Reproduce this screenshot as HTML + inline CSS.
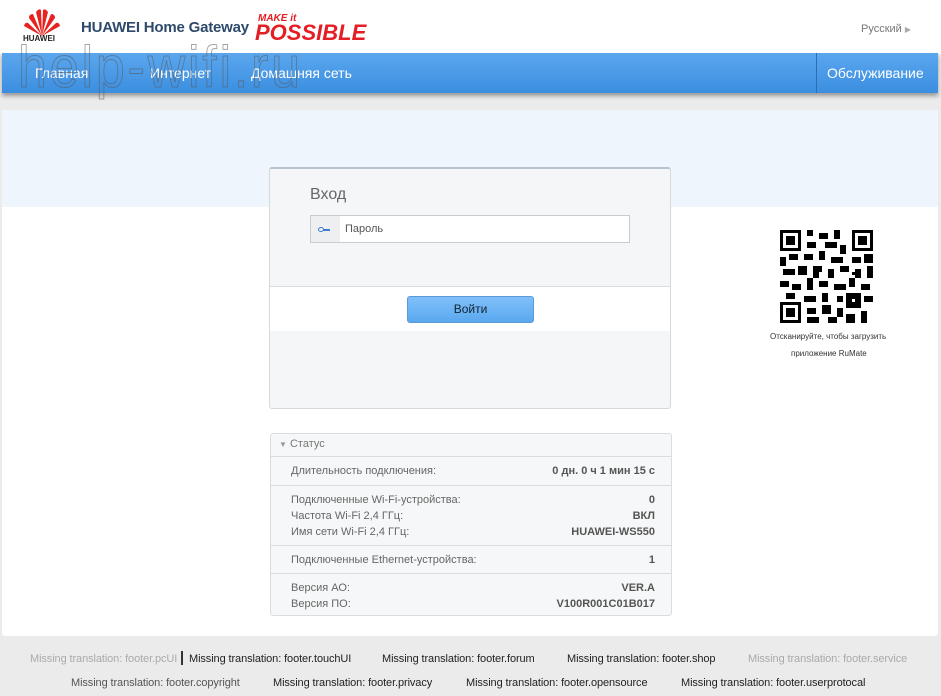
<!DOCTYPE html>
<html><head><meta charset="utf-8"><style>
*{margin:0;padding:0;box-sizing:border-box}
body{width:941px;height:696px;background:#ebebeb;font-family:"Liberation Sans",sans-serif;position:relative;overflow:hidden}
.a{position:absolute}
.hdr{left:0;top:0;width:941px;height:54px;background:#fff}
.nav{left:2px;top:53px;width:936px;height:40px;background:linear-gradient(#5ba7ee,#3b8ee0);box-shadow:0 3px 4px rgba(0,0,0,.35);color:#fff;font-size:14px}
.nav span{position:absolute;top:12px}
.main{left:2px;top:110px;width:936px;height:526px;background:#fff;border-radius:3px}
.band{left:2px;top:110px;width:936px;height:97px;background:#eef5fc}
.box{left:269px;top:167px;width:402px;height:242px;background:#f5f6f8;border:1px solid #d5d8dc;border-top:2px solid #b8c2cc;border-radius:3px}
.st{left:270px;top:433px;width:402px;height:183px;background:#f6f7f8;border:1px solid #dcdcdc;border-radius:3px;font-size:11px;color:#666}
.row{position:absolute;left:20px;right:16px}
.row b{position:absolute;right:0;color:#555}
.sep{position:absolute;left:0;right:0;height:1px;background:#dcdcdc}
.ft{font-size:11px;letter-spacing:-0.1px;color:#222;top:653px}
.g{color:#aaa}
</style></head><body>
<div class="a hdr"></div>
<svg class="a" style="left:22px;top:6px" width="40" height="32" viewBox="0 0 40 32">
<g fill="#e8231f"><path d="M20 30 L14 6 Q17 2 19 4Z"/><path d="M20 30 L26 6 Q23 2 21 4Z"/><path d="M20 30 L7 12 Q7 8 11 8Z"/><path d="M20 30 L33 12 Q33 8 29 8Z"/><path d="M20 30 L2 20 Q3 16 6 17Z"/><path d="M20 30 L38 20 Q37 16 34 17Z"/></g></svg>
<div class="a" style="left:23px;top:34px;font-size:8px;font-weight:bold;color:#222">HUAWEI</div>
<div class="a" style="left:81px;top:19px;font-size:15px;font-weight:bold;color:#2e4a6b;letter-spacing:-0.2px">HUAWEI Home Gateway</div>
<div class="a" style="left:258px;top:13px;font-size:10px;font-weight:bold;color:#e31e24;font-style:italic">MAKE it</div>
<div class="a" style="left:255px;top:20px;font-size:22px;font-weight:900;color:#e31e24;font-style:italic;letter-spacing:0px">POSSIBLE</div>
<div class="a" style="left:861px;top:23px;font-size:11px;color:#777">Русский <span style="font-size:8px;color:#aaa">▶</span></div>
<div class="a nav"><span style="left:33px">Главная</span><span style="left:148px">Интернет</span><span style="left:249px">Домашняя сеть</span>
<div style="position:absolute;left:814px;top:0;width:1px;height:40px;background:#2a6fb5"></div><span style="left:825px">Обслуживание</span></div>
<div class="a" style="left:18px;top:38px;font-size:58px;line-height:60px;color:transparent;-webkit-text-stroke:1px rgba(90,90,90,.55);letter-spacing:3px;transform:scaleX(0.9);transform-origin:left">help-wifi.ru</div>
<div class="a main"></div>
<div class="a band"></div>
<div class="a box">
<div class="a" style="left:40px;top:17px;font-size:16px;color:#666">Вход</div>
<div class="a" style="left:40px;top:46px;width:320px;height:28px;background:#fff;border:1px solid #ccc">
<div style="position:absolute;left:0;top:0;width:29px;height:26px;background:#eeeff1"></div>
<div style="position:absolute;left:7px;top:11px;width:6px;height:5px;border:1.5px solid #3b7bd0;border-radius:50%"></div>
<div style="position:absolute;left:12px;top:13px;width:7px;height:2px;background:#3b7bd0"></div>
<div style="position:absolute;left:34px;top:7px;font-size:11px;color:#555">Пароль</div></div>
<div class="a" style="left:0;top:117px;width:400px;height:45px;background:#fff;border-top:1px solid #ddd"></div>
<div class="a" style="left:137px;top:127px;width:127px;height:27px;background:linear-gradient(#80c0f8,#5aa8f0);border:1px solid #5a9ad8;border-radius:3px;text-align:center;font-size:12px;line-height:25px;color:#123">Войти</div>
</div>
<div class="a st">
<div class="a" style="left:8px;top:4px;font-size:11px;color:#777"><span style="font-size:8px;color:#999">▼</span> Статус</div>
<div class="sep" style="top:22px"></div>
<div class="row" style="top:31px">Длительность подключения:<b>0 дн. 0 ч 1 мин 15 с</b></div>
<div class="sep" style="top:51px"></div>
<div class="row" style="top:60px">Подключенные Wi-Fi-устройства:<b>0</b></div>
<div class="row" style="top:76px">Частота Wi-Fi 2,4 ГГц:<b>ВКЛ</b></div>
<div class="row" style="top:92px">Имя сети Wi-Fi 2,4 ГГц:<b>HUAWEI-WS550</b></div>
<div class="sep" style="top:111px"></div>
<div class="row" style="top:120px">Подключенные Ethernet-устройства:<b>1</b></div>
<div class="sep" style="top:139px"></div>
<div class="row" style="top:148px">Версия АО:<b>VER.A</b></div>
<div class="row" style="top:164px">Версия ПО:<b>V100R001C01B017</b></div>
</div>
<svg class="a" style="left:780px;top:230px" width="93" height="93" viewBox="0 0 31 31" shape-rendering="crispEdges">
<g fill="#000">
<path d="M0 0h7v7h-7zM1 1v5h5v-5zM2 2h3v3h-3z" fill-rule="evenodd"/>
<path d="M24 0h7v7h-7zM25 1v5h5v-5zM26 2h3v3h-3z" fill-rule="evenodd"/>
<path d="M0 24h7v7h-7zM1 25v5h5v-5zM2 26h3v3h-3z" fill-rule="evenodd"/>
<path d="M9 0h2v2h-2zM13 1h3v2h-3zM18 0h2v3h-2zM9 4h3v2h-3zM15 4h4v2h-4zM20 5h2v3h-2zM8 8h3v2h-3zM13 7h2v3h-2zM17 9h4v2h-4zM0 9h2v3h-2zM3 8h3v2h-3zM24 9h3v2h-3zM28 8h3v3h-3zM1 13h4v2h-4zM6 12h3v3h-3zM11 12h3v2h-3zM16 13h2v3h-2zM20 12h3v2h-3zM25 13h2v3h-2zM29 12h2v4h-2zM0 17h3v2h-3zM4 18h3v2h-3zM9 16h2v4h-2zM13 17h3v2h-3zM18 18h4v2h-4zM23 16h2v3h-2zM27 18h3v2h-3zM2 21h3v2h-3zM8 22h4v2h-4zM14 21h2v3h-2zM19 22h2v2h-2zM22 21h5v5h-5zM28 22h3v2h-3zM9 26h3v2h-3zM14 25h3v3h-3zM19 26h2v3h-2zM9 29h4v2h-4zM16 29h3v2h-3zM22 28h3v3h-3zM27 27h2v4h-2zM11 14h2v2h-2zM24 14h1v1h-1z"/>
</g><rect x="24" y="23" width="1" height="1" fill="#fff"/></svg>
<div class="a" style="left:770px;top:332px;font-size:8px;color:#333">Отсканируйте, чтобы загрузить</div>
<div class="a" style="left:791px;top:349px;font-size:8px;color:#333">приложение RuMate</div>
<div class="a ft g" style="left:30px">Missing translation: footer.pcUI</div>
<div class="a" style="left:181px;top:651px;width:2px;height:14px;background:#333"></div>
<div class="a ft" style="left:189px">Missing translation: footer.touchUI</div>
<div class="a ft" style="left:382px">Missing translation: footer.forum</div>
<div class="a ft" style="left:567px">Missing translation: footer.shop</div>
<div class="a ft g" style="left:748px">Missing translation: footer.service</div>
<div class="a ft" style="left:71px;top:677px;color:#555">Missing translation: footer.copyright</div>
<div class="a ft" style="left:273px;top:677px">Missing translation: footer.privacy</div>
<div class="a ft" style="left:466px;top:677px">Missing translation: footer.opensource</div>
<div class="a ft" style="left:681px;top:677px">Missing translation: footer.userprotocal</div>
</body></html>
